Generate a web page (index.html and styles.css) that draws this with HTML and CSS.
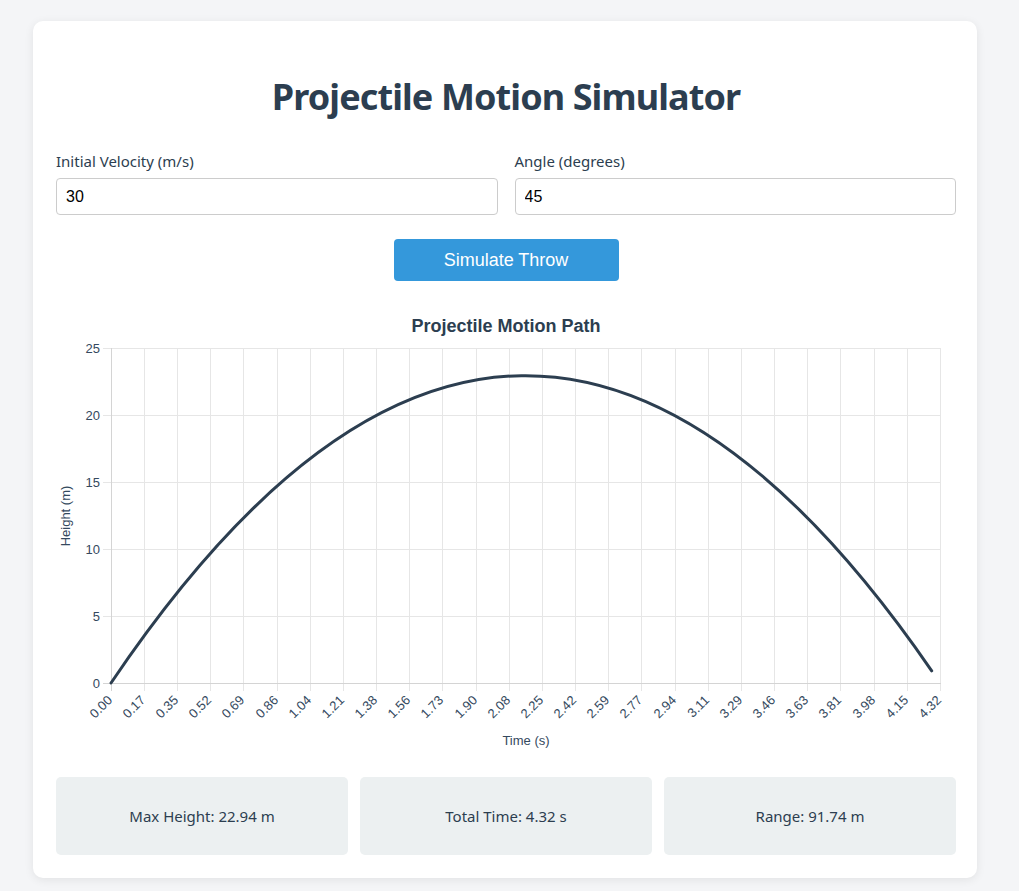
FILE: index.html
```html
<!DOCTYPE html>
<html lang="en">
<head>
<meta charset="utf-8">
<title>Projectile Motion Simulator</title>
<link rel="stylesheet" href="styles.css">
</head>
<body>
<div class="card">
  <h1 class="title">Projectile Motion Simulator</h1>
  <div class="controls">
    <div class="field">
      <label class="label" for="velocity">Initial Velocity (m/s)</label>
      <input class="input" id="velocity" type="number" value="30">
    </div>
    <div class="field">
      <label class="label" for="angle">Angle (degrees)</label>
      <input class="input" id="angle" type="number" value="45">
    </div>
  </div>
  <div class="actions">
    <button class="button" type="button">Simulate Throw</button>
  </div>
  <svg class="chart" width="900" height="460" viewBox="56 300 900 460" xmlns="http://www.w3.org/2000/svg">
    <text class="chart-title" x="506" y="332" text-anchor="middle">Projectile Motion Path</text>
    <g class="grid">
      <line x1="103" y1="348.5" x2="940" y2="348.5"/>
      <line x1="103" y1="415.5" x2="940" y2="415.5"/>
      <line x1="103" y1="482.5" x2="940" y2="482.5"/>
      <line x1="103" y1="549.5" x2="940" y2="549.5"/>
      <line x1="103" y1="616.5" x2="940" y2="616.5"/>
      <line x1="144.5" y1="348" x2="144.5" y2="691"/>
      <line x1="177.5" y1="348" x2="177.5" y2="691"/>
      <line x1="210.5" y1="348" x2="210.5" y2="691"/>
      <line x1="243.5" y1="348" x2="243.5" y2="691"/>
      <line x1="277.5" y1="348" x2="277.5" y2="691"/>
      <line x1="310.5" y1="348" x2="310.5" y2="691"/>
      <line x1="343.5" y1="348" x2="343.5" y2="691"/>
      <line x1="376.5" y1="348" x2="376.5" y2="691"/>
      <line x1="409.5" y1="348" x2="409.5" y2="691"/>
      <line x1="442.5" y1="348" x2="442.5" y2="691"/>
      <line x1="476.5" y1="348" x2="476.5" y2="691"/>
      <line x1="509.5" y1="348" x2="509.5" y2="691"/>
      <line x1="542.5" y1="348" x2="542.5" y2="691"/>
      <line x1="575.5" y1="348" x2="575.5" y2="691"/>
      <line x1="608.5" y1="348" x2="608.5" y2="691"/>
      <line x1="641.5" y1="348" x2="641.5" y2="691"/>
      <line x1="675.5" y1="348" x2="675.5" y2="691"/>
      <line x1="708.5" y1="348" x2="708.5" y2="691"/>
      <line x1="741.5" y1="348" x2="741.5" y2="691"/>
      <line x1="774.5" y1="348" x2="774.5" y2="691"/>
      <line x1="807.5" y1="348" x2="807.5" y2="691"/>
      <line x1="840.5" y1="348" x2="840.5" y2="691"/>
      <line x1="874.5" y1="348" x2="874.5" y2="691"/>
      <line x1="907.5" y1="348" x2="907.5" y2="691"/>
      <line x1="940.5" y1="348" x2="940.5" y2="691"/>
    </g>
    <g class="axis">
      <line x1="111.5" y1="348" x2="111.5" y2="691"/>
      <line x1="103" y1="683.5" x2="941" y2="683.5"/>
    </g>
    <g class="yticks" text-anchor="end">
      <text x="100" y="352.5">25</text>
      <text x="100" y="419.5">20</text>
      <text x="100" y="486.5">15</text>
      <text x="100" y="553.5">10</text>
      <text x="100" y="620.5">5</text>
      <text x="100" y="687.5">0</text>
    </g>
    <g class="xticks" text-anchor="end">
      <text x="113" y="701" transform="rotate(-45 113 701)">0.00</text>
      <text x="146" y="701" transform="rotate(-45 146 701)">0.17</text>
      <text x="179" y="701" transform="rotate(-45 179 701)">0.35</text>
      <text x="212" y="701" transform="rotate(-45 212 701)">0.52</text>
      <text x="245" y="701" transform="rotate(-45 245 701)">0.69</text>
      <text x="279" y="701" transform="rotate(-45 279 701)">0.86</text>
      <text x="312" y="701" transform="rotate(-45 312 701)">1.04</text>
      <text x="345" y="701" transform="rotate(-45 345 701)">1.21</text>
      <text x="378" y="701" transform="rotate(-45 378 701)">1.38</text>
      <text x="411" y="701" transform="rotate(-45 411 701)">1.56</text>
      <text x="444" y="701" transform="rotate(-45 444 701)">1.73</text>
      <text x="478" y="701" transform="rotate(-45 478 701)">1.90</text>
      <text x="511" y="701" transform="rotate(-45 511 701)">2.08</text>
      <text x="544" y="701" transform="rotate(-45 544 701)">2.25</text>
      <text x="577" y="701" transform="rotate(-45 577 701)">2.42</text>
      <text x="610" y="701" transform="rotate(-45 610 701)">2.59</text>
      <text x="643" y="701" transform="rotate(-45 643 701)">2.77</text>
      <text x="677" y="701" transform="rotate(-45 677 701)">2.94</text>
      <text x="710" y="701" transform="rotate(-45 710 701)">3.11</text>
      <text x="743" y="701" transform="rotate(-45 743 701)">3.29</text>
      <text x="776" y="701" transform="rotate(-45 776 701)">3.46</text>
      <text x="809" y="701" transform="rotate(-45 809 701)">3.63</text>
      <text x="842" y="701" transform="rotate(-45 842 701)">3.81</text>
      <text x="876" y="701" transform="rotate(-45 876 701)">3.98</text>
      <text x="909" y="701" transform="rotate(-45 909 701)">4.15</text>
      <text x="942" y="701" transform="rotate(-45 942 701)">4.32</text>
    </g>
    <text class="axis-title" x="526" y="745" text-anchor="middle">Time (s)</text>
    <text class="axis-title" x="70" y="516" text-anchor="middle" transform="rotate(-90 70 516)">Height (m)</text>
    <path class="curve" d="M111 683 Q521.4 74.5 931.7 670.8"/>
  </svg>
  <div class="stats">
    <div class="stat">Max Height: 22.94 m</div>
    <div class="stat">Total Time: 4.32 s</div>
    <div class="stat">Range: 91.74 m</div>
  </div>
</div>
</body>
</html>
```
FILE: styles.css
```css
html, body {
  margin: 0;
  padding: 0;
}

body {
  background: #f4f5f7;
  font-family: "Noto Sans", "Open Sans", sans-serif;
  color: #2c3e50;
  padding: 21px 0 40px 33px;
}

.card {
  width: 944px;
  box-sizing: border-box;
  background: #ffffff;
  border-radius: 10px;
  box-shadow: 0 2px 10px rgba(0, 0, 0, 0.08);
  padding: 53px 21px 23px 23px;
}

.title {
  margin: 0 0 31px;
  font-size: 36px;
  line-height: 46px;
  font-weight: 700;
  text-align: center;
  color: #2c3e50;
  letter-spacing: -0.9px;
}

.controls {
  display: grid;
  grid-template-columns: 1fr 1fr;
  gap: 17px;
}

.label {
  display: block;
  font-size: 15px;
  line-height: 20px;
  margin-bottom: 7px;
  color: #2c3e50;
}

.input {
  display: block;
  width: 100%;
  height: 37px;
  box-sizing: border-box;
  border: 1px solid #cccccc;
  border-radius: 4px;
  padding: 0 9px;
  font-family: "Liberation Sans", Arial, sans-serif;
  font-size: 16px;
  color: #000000;
  background: #ffffff;
}

.actions {
  display: flex;
  justify-content: center;
  margin-top: 24px;
}

.button {
  width: 225px;
  height: 42px;
  border: none;
  border-radius: 4px;
  background: #3498db;
  color: #ffffff;
  font-family: "Liberation Sans", Arial, sans-serif;
  font-size: 18px;
  padding: 0;
}

.chart {
  display: block;
  margin-top: 19px;
  font-family: "Liberation Sans", Arial, sans-serif;
}

.chart-title {
  font-size: 18px;
  font-weight: 700;
  fill: #2c3e50;
}

.grid line {
  stroke: #e6e6e6;
  stroke-width: 1;
}

.axis line {
  stroke: #d4d4d4;
  stroke-width: 1;
}

.yticks text,
.xticks text {
  font-size: 13px;
  fill: #34495e;
}

.axis-title {
  font-size: 13px;
  fill: #34495e;
}

.curve {
  fill: none;
  stroke: #2c3e50;
  stroke-width: 3;
  stroke-linecap: round;
}

.stats {
  display: grid;
  grid-template-columns: repeat(3, 1fr);
  gap: 12px;
  margin-top: 17px;
}

.stat {
  height: 78px;
  display: flex;
  align-items: center;
  justify-content: center;
  background: #ecf0f1;
  border-radius: 5px;
  font-size: 15px;
  color: #2c3e50;
}
```
